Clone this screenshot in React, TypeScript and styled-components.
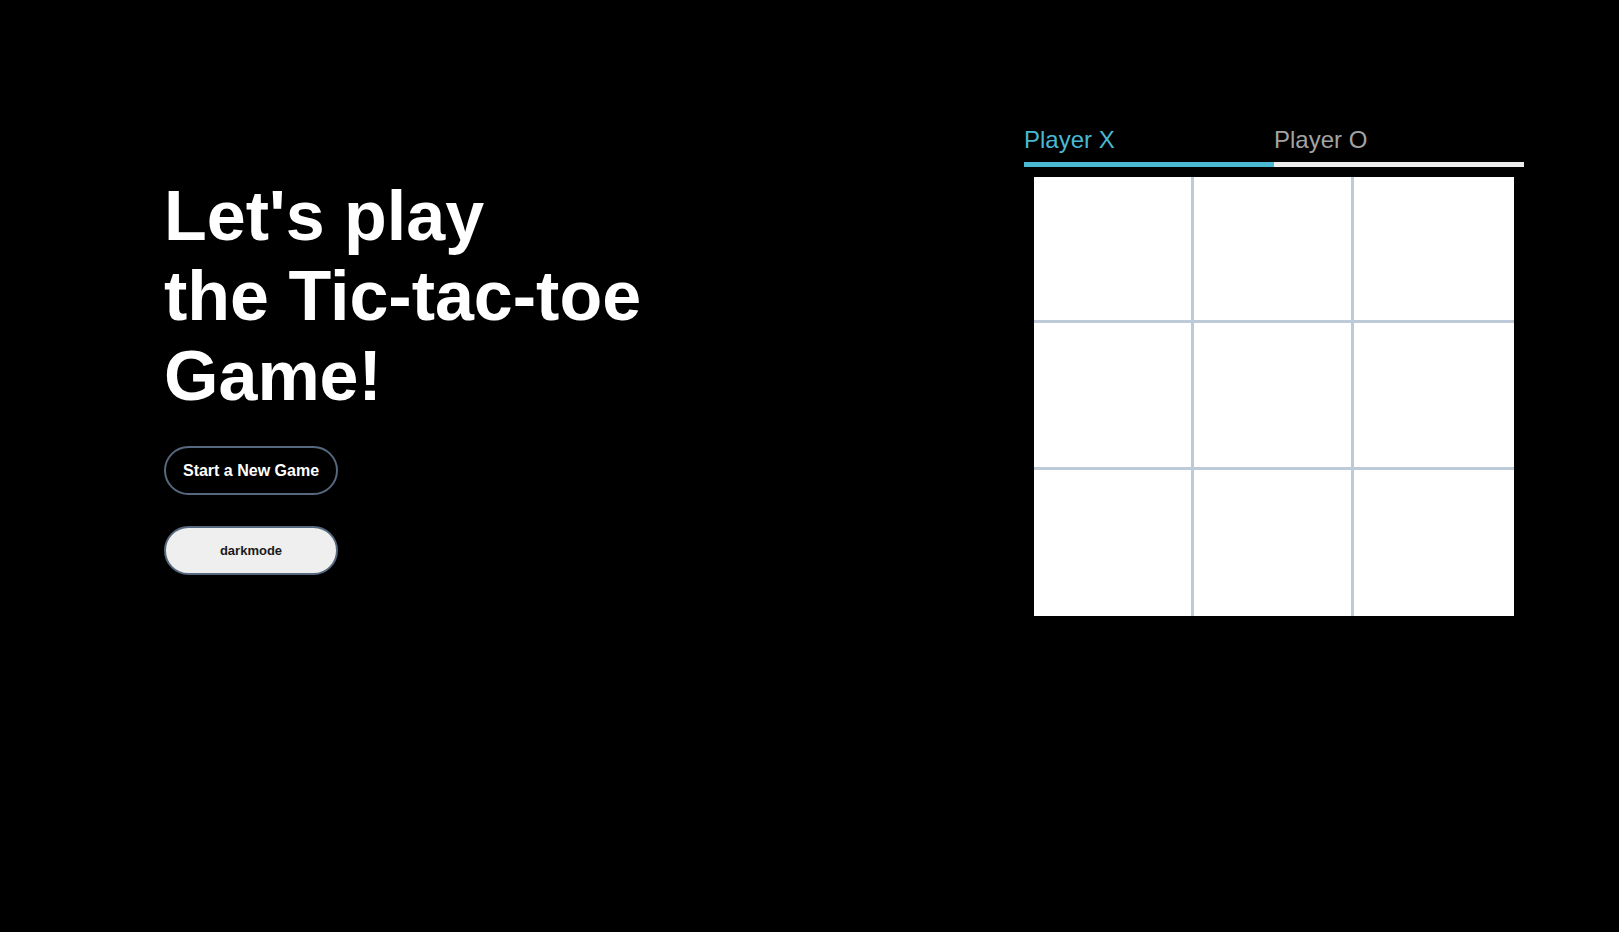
import React, { useState } from 'react';
import styled, { createGlobalStyle } from 'styled-components';

const GlobalStyle = createGlobalStyle`
  html, body {
    margin: 0;
    padding: 0;
    background: #000;
    font-family: "Liberation Sans", Arial, sans-serif;
  }
`;

const Page = styled.div`
  display: flex;
  justify-content: space-between;
  align-items: flex-start;
  min-height: 932px;
  padding: 126px 95px 0 164px;
  box-sizing: border-box;
`;

const Intro = styled.div`
  display: flex;
  flex-direction: column;
  align-items: flex-start;
  margin-top: 50px;
`;

const Heading = styled.h1`
  margin: 0 0 30px;
  color: #fff;
  font-size: 70px;
  font-weight: 700;
  line-height: normal;
`;

const PillButton = styled.button<{ $light?: boolean }>`
  width: 174px;
  height: 49px;
  border-radius: 25px;
  border: 2px solid #56687e;
  background: ${(p) => (p.$light ? '#efefef' : 'transparent')};
  color: ${(p) => (p.$light ? '#1a1a1a' : '#fff')};
  font-family: "Liberation Sans", Arial, sans-serif;
  font-size: ${(p) => (p.$light ? '13px' : '16px')};
  font-weight: 700;
  cursor: pointer;
  margin-bottom: 31px;
`;

const GamePanel = styled.div`
  width: 500px;
`;

const Tabs = styled.div`
  display: flex;
`;

const Tab = styled.div<{ $active?: boolean }>`
  flex: 1;
  font-size: 24px;
  line-height: normal;
  padding-bottom: 8px;
  color: ${(p) => (p.$active ? '#49b8d3' : '#a3a3a3')};
  border-bottom: 5px solid ${(p) => (p.$active ? '#49b8d3' : '#ececec')};
`;

const Board = styled.div`
  margin: 10px;
  display: grid;
  grid-template-columns: repeat(3, 160px);
  grid-template-rows: repeat(3, 1fr);
  height: 439px;
  background: #fff;
`;

const Cell = styled.div<{ $lastCol: boolean; $lastRow: boolean }>`
  box-sizing: border-box;
  background: #fff;
  border-right: ${(p) => (p.$lastCol ? 'none' : '3px solid #bdcad7')};
  border-bottom: ${(p) => (p.$lastRow ? 'none' : '3px solid #bdcad7')};
  display: flex;
  align-items: center;
  justify-content: center;
  font-size: 80px;
  cursor: pointer;
`;

export default function App() {
  const [cells, setCells] = useState<string[]>(Array(9).fill(''));
  const [xTurn, setXTurn] = useState(true);

  const play = (i: number) => {
    if (cells[i]) return;
    const next = [...cells];
    next[i] = xTurn ? 'X' : 'O';
    setCells(next);
    setXTurn(!xTurn);
  };

  const reset = () => {
    setCells(Array(9).fill(''));
    setXTurn(true);
  };

  return (
    <>
      <GlobalStyle />
      <Page>
        <Intro>
          <Heading>
            Let's play
            <br />
            the Tic-tac-toe
            <br />
            Game!
          </Heading>
          <PillButton onClick={reset}>Start a New Game</PillButton>
          <PillButton $light>darkmode</PillButton>
        </Intro>
        <GamePanel>
          <Tabs>
            <Tab $active={xTurn}>Player X</Tab>
            <Tab $active={!xTurn}>Player O</Tab>
          </Tabs>
          <Board>
            {cells.map((c, i) => (
              <Cell key={i} $lastCol={i % 3 === 2} $lastRow={i >= 6} onClick={() => play(i)}>
                {c}
              </Cell>
            ))}
          </Board>
        </GamePanel>
      </Page>
    </>
  );
}
